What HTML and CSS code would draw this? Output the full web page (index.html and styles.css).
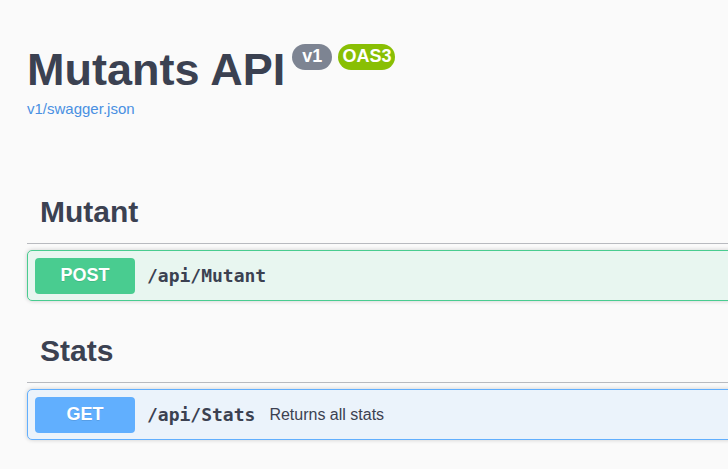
FILE: index.html
```html
<!DOCTYPE html>
<html lang="en">
<head>
<meta charset="utf-8">
<title>Mutants API</title>
<link rel="stylesheet" href="styles.css">
</head>
<body>
<main class="page">
  <header class="info">
    <div class="title-row">
      <h1 class="title">Mutants API</h1>
      <div class="badges">
        <span class="badge">v1</span>
        <span class="badge badge-oas">OAS3</span>
      </div>
    </div>
    <a class="spec-link" href="v1/swagger.json">v1/swagger.json</a>
  </header>
  <section class="group">
    <h2 class="tag">Mutant</h2>
    <button class="operation post" type="button">
      <span class="method">POST</span>
      <span class="path">/api/Mutant</span>
    </button>
  </section>
  <section class="group">
    <h2 class="tag">Stats</h2>
    <button class="operation get" type="button">
      <span class="method">GET</span>
      <span class="path">/api/Stats</span>
      <span class="summary">Returns all stats</span>
    </button>
  </section>
</main>
</body>
</html>
```
FILE: styles.css
```css
* {
  box-sizing: border-box;
}

body {
  margin: 0;
  background: #fafafa;
  color: #3b4151;
  font-family: "Liberation Sans", Arial, sans-serif;
  overflow-x: hidden;
}

.page {
  padding: 44px 0 8px 27px;
}

.info {
  margin-bottom: 64px;
}

.title-row {
  display: flex;
  align-items: flex-start;
  gap: 7px;
}

.title {
  margin: 0;
  font-size: 45px;
  line-height: 52px;
}

.badges {
  display: flex;
  gap: 6px;
}

.badge {
  height: 26px;
  padding: 0 10px;
  border-radius: 13px;
  background: #7d8492;
  color: #fff;
  font-size: 18px;
  font-weight: 700;
  line-height: 24px;
}

.badge-oas {
  padding: 0 4px;
  background: #89bf04;
}

.spec-link {
  display: block;
  margin-top: 3px;
  color: #4990e2;
  font-size: 15px;
  line-height: 20px;
  text-decoration: none;
}

.group {
  margin-bottom: 21px;
}

.tag {
  margin: 0 0 6px;
  padding: 6px 13px 8px;
  border-bottom: 1px solid rgba(59, 65, 81, 0.35);
  font-size: 30px;
  line-height: 46px;
}

.operation {
  display: flex;
  align-items: center;
  width: calc(100% + 8px);
  min-height: 51px;
  padding: 6px 7px;
  border: 1px solid;
  border-radius: 5px;
  box-shadow: 0 0 4px rgba(0, 0, 0, 0.19);
  color: #3b4151;
  font-family: inherit;
  text-align: left;
}

.post {
  border-color: #49cc90;
  background: #e8f6f0;
}

.get {
  border-color: #61affe;
  background: #ebf3fb;
}

.method {
  width: 100px;
  padding-bottom: 2px;
  border-radius: 4px;
  color: #fff;
  font-size: 18px;
  font-weight: 700;
  line-height: 34px;
  text-align: center;
  text-shadow: 0 1px 0 rgba(0, 0, 0, 0.1);
}

.post .method {
  background: #49cc90;
}

.get .method {
  background: #61affe;
}

.path {
  margin-left: 12px;
  font-family: "DejaVu Sans Mono", monospace;
  font-size: 18px;
  font-weight: 700;
}

.summary {
  margin-left: 14px;
  font-size: 16px;
}
```
